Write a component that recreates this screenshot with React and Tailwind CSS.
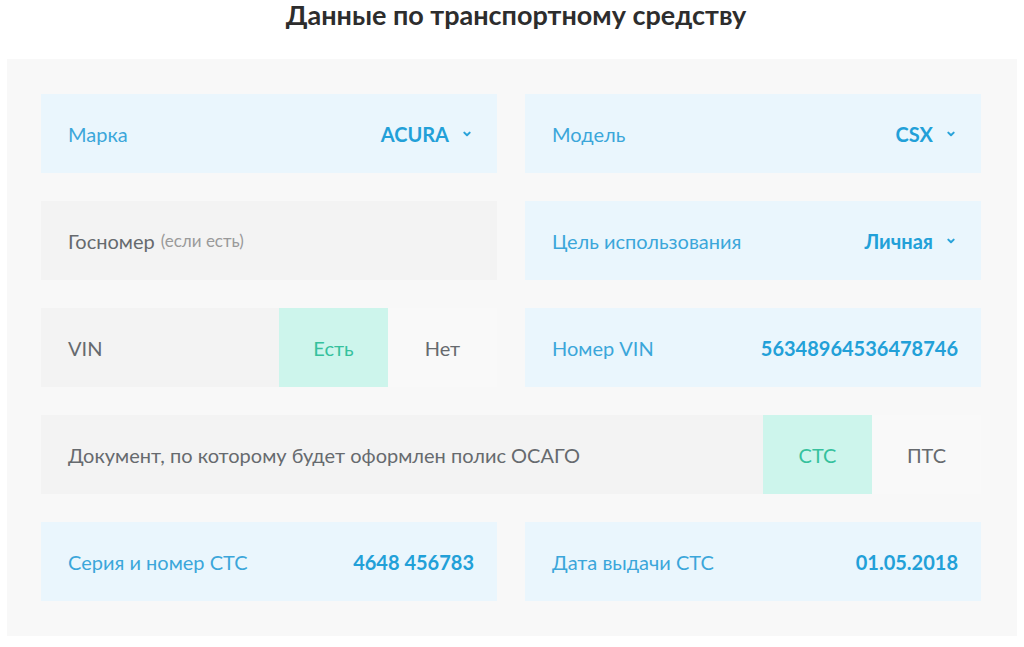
import React from 'react';

const Chevron = () => (
  <svg width="10" height="10" viewBox="0 0 10 10" className="ml-[13px]" fill="none">
    <path d="M2.3 3.6 5 6.3 7.7 3.6" stroke="#2aa3da" strokeWidth="2" strokeLinecap="round" strokeLinejoin="round" />
  </svg>
);

const SelectCard = ({ label, value }) => (
  <div className="flex items-center justify-between h-[79px] bg-[#eaf6fd] pl-[27px] pr-[25px]">
    <span className="text-[#3ba6da]">{label}</span>
    <span className="flex items-center font-bold text-[#22a0d8]">
      {value}
      <Chevron />
    </span>
  </div>
);

const ValueCard = ({ label, value }) => (
  <div className="flex items-center justify-between h-[79px] bg-[#eaf6fd] pl-[27px] pr-[23px]">
    <span className="text-[#3ba6da]">{label}</span>
    <span className="font-bold text-[#22a0d8]">{value}</span>
  </div>
);

const Toggle = ({ label, yes, no, className = '' }) => (
  <div className={`flex h-[79px] bg-[#f3f3f3] ${className}`}>
    <div className="flex-1 flex items-center pl-[27px] text-[#666a6e]">{label}</div>
    <div className="w-[109px] flex items-center justify-center bg-[#cdf5ec] text-[#35c19d]">{yes}</div>
    <div className="w-[109px] flex items-center justify-center bg-[#f9f9f9] text-[#666a6e]">{no}</div>
  </div>
);

const App = () => {
  return (
    <div className="min-h-screen bg-white text-[20px]" style={{ fontFamily: 'Lato, "Noto Sans", sans-serif' }}>
      <h1 className="text-center font-bold text-[27px] text-[#2d2d2d] h-[59px] leading-[30px] pl-[8px]">
        Данные по транспортному средству
      </h1>
      <div className="mx-[7px] w-[1010px] bg-[#f8f8f8] pl-[34px] pr-[36px] pt-[35px] pb-[35px]">
        <div className="grid grid-cols-2 gap-x-[28px] gap-y-[28px]">
          <SelectCard label="Марка" value="ACURA" />
          <SelectCard label="Модель" value="CSX" />
          <div className="flex items-center h-[79px] bg-[#f3f3f3] pl-[27px] text-[#666a6e]">
            Госномер<span className="ml-[6px] text-[17px] text-[#9a9a9a]">(если есть)</span>
          </div>
          <SelectCard label="Цель использования" value="Личная" />
          <Toggle label="VIN" yes="Есть" no="Нет" />
          <ValueCard label="Номер VIN" value="56348964536478746" />
          <Toggle className="col-span-2" label="Документ, по которому будет оформлен полис ОСАГО" yes="СТС" no="ПТС" />
          <ValueCard label="Серия и номер СТС" value="4648 456783" />
          <ValueCard label="Дата выдачи СТС" value="01.05.2018" />
        </div>
      </div>
    </div>
  );
};

export default App;
